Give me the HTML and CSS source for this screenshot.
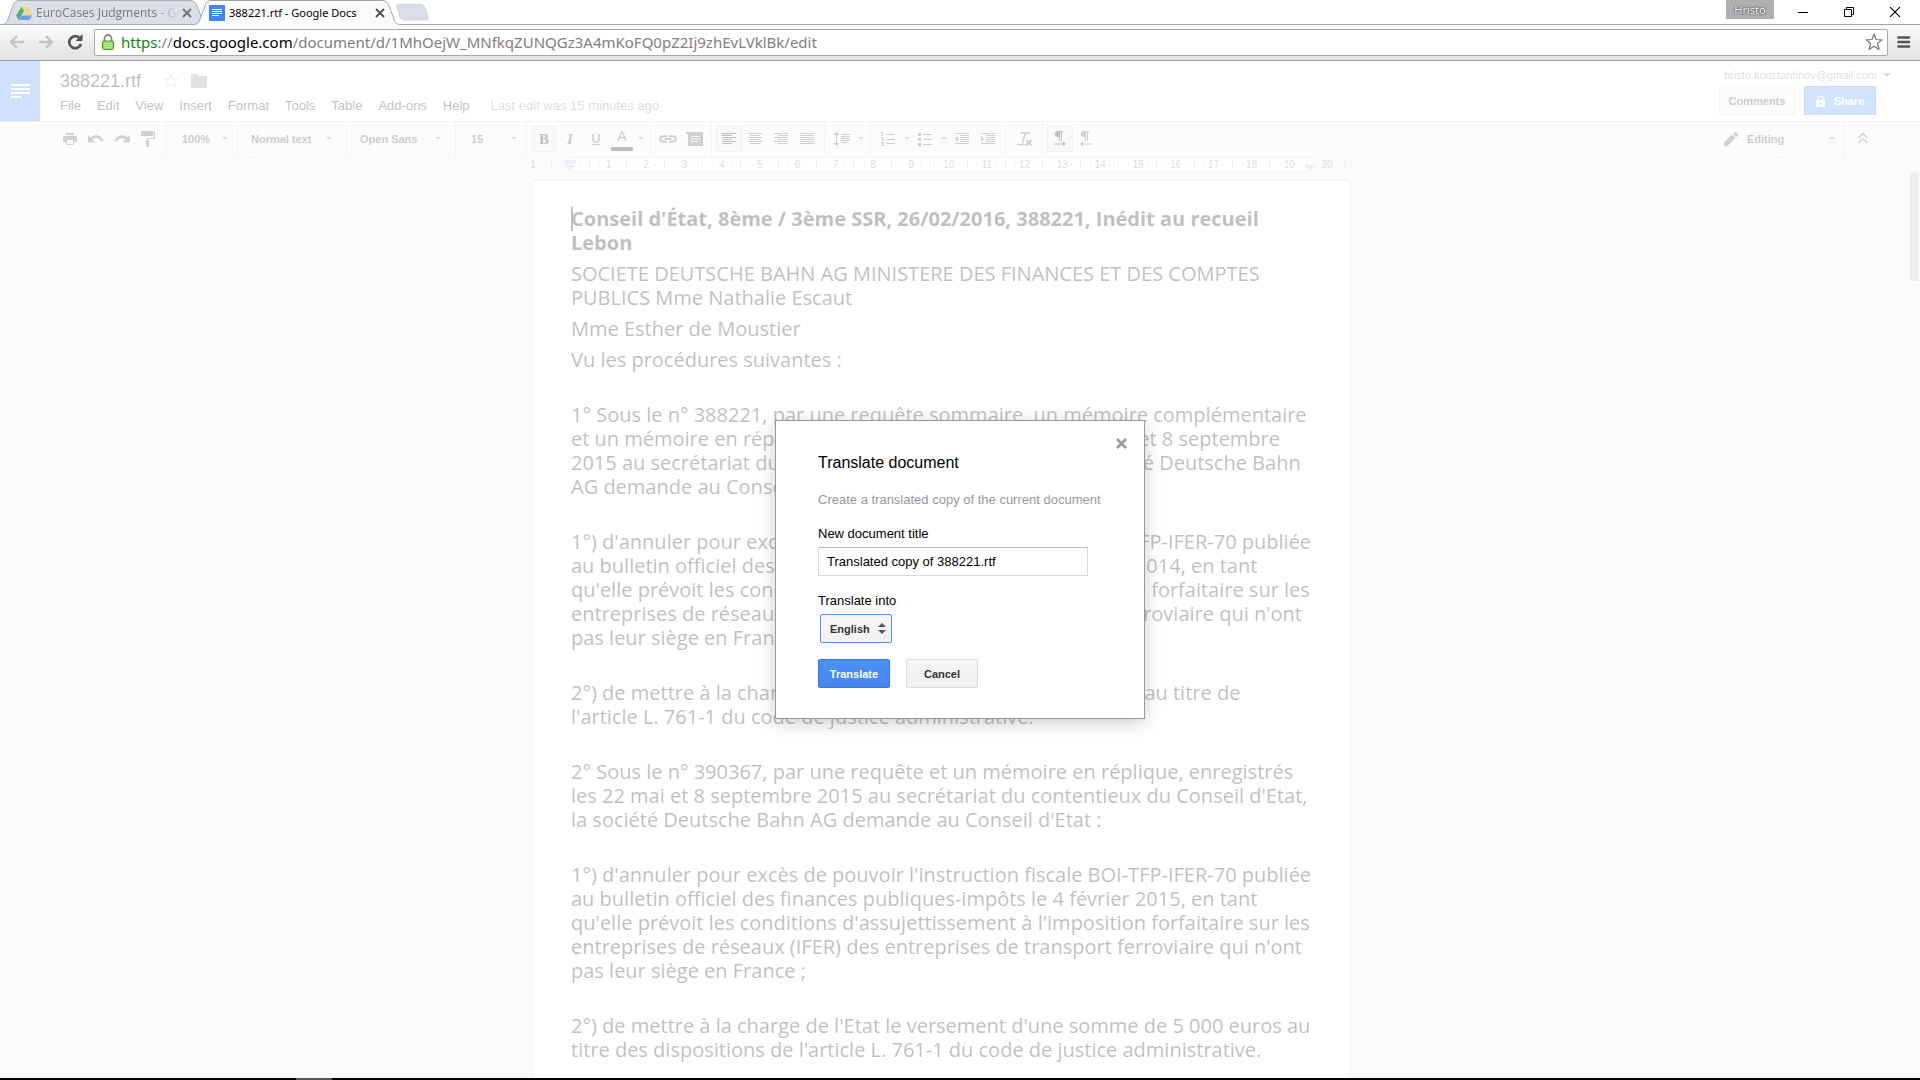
FILE: index.html
```html
<!DOCTYPE html>
<html lang="en">
<head>
<meta charset="utf-8">
<title>388221.rtf - Google Docs</title>
<link rel="stylesheet" href="styles.css">
</head>
<body>
<header class="browser">
  <div class="tabstrip">
    <div class="tab tab-back">
      <svg class="tab-shape" width="204" height="25" viewBox="0 0 204 25"><path d="M0 24.500C4 24 5 22 6 19L11 6C12 2 14 .5 17 .5H188C192 .5 194 3 195 6L200 19C201 22 202 24 204 24.500Z" fill="#dbe0e7" stroke="#a9adb2"/></svg>
      <svg class="favicon" width="16" height="16" viewBox="0 0 16 16"><path d="M5.500 1.500h5L16 10.500h-5z" fill="#ffd666"/><path d="M5.500 1.500L8 6 2.700 15 0 10.500z" fill="#4db380"/><path d="M5.400 10.500H16L13.300 15H2.700z" fill="#6d9cf2"/></svg>
      <span class="tab-title fade">EuroCases Judgments - Go</span>
      <button class="tab-close" aria-label="Close tab"><svg width="10" height="10" viewBox="0 0 10 10"><path d="M1 1l8 8M9 1L1 9" stroke="#777" stroke-width="2"/></svg></button>
    </div>
    <div class="tab tab-front">
      <svg class="tab-shape" width="206" height="26" viewBox="0 0 206 26"><path d="M0 26V24.500C4 24 5 22 6 19L11 6C12 2 14 .5 17 .5H188C192 .5 194 3 195 6L200 19C201 22 202 24 206 24.500V26Z" fill="#fbfbfb"/><path d="M0 24.500C4 24 5 22 6 19L11 6C12 2 14 .5 17 .5H188C192 .5 194 3 195 6L200 19C201 22 202 24 206 24.500" fill="none" stroke="#a5a5a5"/></svg>
      <svg class="favicon" width="16" height="16" viewBox="0 0 16 16"><rect width="16" height="16" rx="1" fill="#4285f4"/><path d="M3 4.500h10M3 6.500h10M3 8.500h10M3 10.500h7" stroke="#fff"/></svg>
      <span class="tab-title">388221.rtf - Google Docs</span>
      <button class="tab-close" aria-label="Close tab"><svg width="10" height="10" viewBox="0 0 10 10"><path d="M1 1l8 8M9 1L1 9" stroke="#555" stroke-width="2"/></svg></button>
    </div>
    <button class="new-tab" aria-label="New tab"><svg width="33" height="17" viewBox="0 0 33 17"><path d="M3 .5H25C27 .5 28 2 29 4L32 13C32.500 15 32 16 30 16H9C6 16 5 15 4 13L1 3C.5 1.500 1 .5 3 .5Z" fill="#dbe0e7" stroke="#cfd2d6"/></svg></button>
    <div class="window-controls">
      <button class="profile">Hristo</button>
      <button class="win-btn" aria-label="Minimize"><svg width="10" height="10" viewBox="0 0 10 10"><path d="M0 5.500h10" stroke="#000"/></svg></button>
      <button class="win-btn" aria-label="Restore"><svg width="10" height="10" viewBox="0 0 10 10"><path d="M.5 2.500h7v7h-7zM2.500 2V.5h7v7H8" fill="none" stroke="#000"/></svg></button>
      <button class="win-btn" aria-label="Close"><svg width="10" height="10" viewBox="0 0 10 10"><path d="M0 0l10 10M10 0L0 10" stroke="#000" stroke-width="1.200"/></svg></button>
    </div>
  </div>
  <div class="navbar">
    <button class="nav-btn" aria-label="Back"><svg width="16" height="14" viewBox="0 0 16 14"><path d="M8 1L2 7l6 6M2 7h13" fill="none" stroke="#c3c3c3" stroke-width="2.400"/></svg></button>
    <button class="nav-btn" aria-label="Forward"><svg width="16" height="14" viewBox="0 0 16 14"><path d="M8 1l6 6-6 6M14 7H1" fill="none" stroke="#c3c3c3" stroke-width="2.400"/></svg></button>
    <button class="nav-btn" aria-label="Reload"><svg width="16" height="16" viewBox="0 0 16 16"><path d="M13 4.500A6 6 0 1 0 14 10" fill="none" stroke="#555" stroke-width="2.700"/><path d="M15.500 0v7h-7z" fill="#555"/></svg></button>
    <div class="omnibox">
      <svg width="12" height="16" viewBox="0 0 12 16"><path d="M2.500 8V4.500a3.500 3.500 0 0 1 7 0V8" fill="none" stroke="#888" stroke-width="1.800"/><rect x=".5" y="7" width="11" height="8.500" rx="1" fill="#8fdc62" stroke="#4f9a35"/><path d="M2 9.500h8M2 11.500h8M2 13.500h8" stroke="#b4ee90"/></svg>
      <div class="url"><span class="scheme">https</span>://<span class="host">docs.google.com</span>/document/d/1MhOejW_MNfkqZUNQGz3A4mKoFQ0pZ2Ij9zhEvLVklBk/edit</div>
      <button class="bookmark" aria-label="Bookmark"><svg width="18" height="18" viewBox="0 0 18 18"><path d="M9 1l2 5.500 6 .3-4.600 3.700 1.600 6L9 13.200 4 16.500l1.600-6L1 6.800l6-.3z" fill="#fff" stroke="#777" stroke-width="1.200" stroke-linejoin="round"/></svg></button>
    </div>
    <button class="chrome-menu" aria-label="Menu"><svg width="14" height="14" viewBox="0 0 14 14"><path d="M1.500 2.500h10.500M1.500 7h10.500M1.500 11.500h10.500" stroke="#555" stroke-width="2.600" stroke-linecap="round"/></svg></button>
  </div>
</header>

<main class="app">
  <header class="docs-header">
    <a class="docs-home" href="#" aria-label="Docs home"><svg width="20" height="14" viewBox="0 0 20 14"><path d="M1 1h19M1 5h19M1 9h19M1 13h10" stroke="#fff" stroke-width="2"/></svg></a>
    <div class="docs-titles">
      <div class="title-row">
        <h1 class="doc-title">388221.rtf</h1>
        <button class="icon-btn" aria-label="Star"><svg width="16" height="16" viewBox="0 0 16 16"><path d="M8 1.500l1.700 4.700 5 .1-4 3 1.500 4.900L8 11.400l-4.200 2.800 1.500-4.900-4-3 5-.1z" fill="none" stroke="#bbb"/></svg></button>
        <button class="icon-btn" aria-label="Move to folder"><svg width="16" height="14" viewBox="0 0 16 14"><path d="M0 0h6l2 2h8v12H0z" fill="#8c8c8c"/></svg></button>
      </div>
      <nav class="menus">
        <button>File</button><button>Edit</button><button>View</button><button>Insert</button><button>Format</button><button>Tools</button><button>Table</button><button>Add-ons</button><button>Help</button>
        <a class="last-edit" href="#">Last edit was 15 minutes ago</a>
      </nav>
    </div>
    <div class="account">
      <button class="email">hristo.konstantinov@gmail.com <svg width="8" height="4" viewBox="0 0 8 4"><path d="M0 0h8L4 4z" fill="#777"/></svg></button>
      <div class="account-actions">
        <button class="btn comments">Comments</button>
        <button class="btn share"><svg width="9" height="12" viewBox="0 0 9 12"><path d="M2 5V3.500a2.500 2.500 0 0 1 5 0V5" fill="none" stroke="#fff" stroke-width="1.200"/><path d="M0 5h9v7H0zM4.500 7.200a1.300 1.300 0 1 0 .01 0z" fill="#fff" fill-rule="evenodd"/></svg>Share</button>
      </div>
    </div>
  </header>

  <div class="toolbar">
    <div class="group group-first">
      <button class="tool" aria-label="Print"><svg width="14" height="12" viewBox="0 0 14 12"><path d="M3 0h8v2H3zM1 3h12q1 0 1 1v5h-3V7H3v2H0V4q0-1 1-1z"/><path d="M3.500 7v4.500h7V7" fill="none" stroke="#444"/></svg></button>
      <button class="tool" aria-label="Undo"><svg width="16" height="8" viewBox="0 0 16 8"><path d="M0 0l2.500 2.500C6-1 13-.5 15.500 6l-2 .7C11.500 2.500 7.500 2 4.500 4.500L7.500 7.500H0z"/></svg></button>
      <button class="tool" aria-label="Redo"><svg width="16" height="8" viewBox="0 0 16 8"><path d="M16 0l-2.500 2.500C10-1 3-.5.5 6l2 .7C4.500 2.500 8.500 2 11.500 4.500L8.500 7.500H16z"/></svg></button>
      <button class="tool" aria-label="Paint format"><svg width="14" height="16" viewBox="0 0 14 16"><path d="M0 0h12v5H0zM5 9h3v7H5z"/><path d="M12 1.500h1.500v6h-7V9" fill="none" stroke="#444"/></svg></button>
    </div>
    <div class="group drop narrow"><button>100%<i class="caret"></i></button></div>
    <div class="group drop wide"><button>Normal text<i class="caret"></i></button></div>
    <div class="group drop wide"><button>Open Sans<i class="caret"></i></button></div>
    <div class="group drop narrow"><button>15<i class="caret"></i></button></div>
    <div class="group">
      <button class="tool active letter bold">B</button>
      <button class="tool letter italic">I</button>
      <button class="tool letter underline">U</button>
      <button class="tool color">A</button>
      <button class="tool-caret" aria-label="Text colour options"><i class="caret"></i></button>
    </div>
    <div class="group">
      <button class="tool" aria-label="Insert link"><svg width="18" height="8" viewBox="0 0 18 8"><path d="M8 1.200H4a2.800 2.800 0 0 0 0 5.600h4M10 1.200h4a2.800 2.800 0 0 1 0 5.600h-4M5.500 4h7" fill="none" stroke="#444" stroke-width="2"/></svg></button>
      <button class="tool" aria-label="Insert comment"><svg width="18" height="14" viewBox="0 0 18 14"><path d="M0 0h18v14H3V3z"/><path d="M6 4.500h9M6 7h9M6 9.500h7" stroke="#f5f5f5" stroke-width="1.200"/></svg></button>
    </div>
    <div class="group">
      <button class="tool active" aria-label="Align left"><svg width="14" height="12" viewBox="0 0 14 12"><path class="line" d="M0 .5h14M0 2.500h10M0 4.500h14M0 6.500h10M0 8.500h14M0 10.500h10"/></svg></button>
      <button class="tool" aria-label="Align centre"><svg width="14" height="12" viewBox="0 0 14 12"><path class="line" d="M0 .5h14M2 2.500h10M0 4.500h14M2 6.500h10M0 8.500h14M2 10.500h10"/></svg></button>
      <button class="tool" aria-label="Align right"><svg width="14" height="12" viewBox="0 0 14 12"><path class="line" d="M0 .5h14M4 2.500h10M0 4.500h14M4 6.500h10M0 8.500h14M4 10.500h10"/></svg></button>
      <button class="tool" aria-label="Justify"><svg width="14" height="12" viewBox="0 0 14 12"><path class="line" d="M0 .5h14M0 2.500h14M0 4.500h14M0 6.500h14M0 8.500h14M0 10.500h14"/></svg></button>
    </div>
    <div class="group">
      <button class="tool" aria-label="Line spacing"><svg width="16" height="14" viewBox="0 0 16 14"><path d="M2.500 0L5.500 3h-6zM2.500 14l3-3h-6z"/><path class="line" d="M2.500 2v10M7 2.500h9M7 4.500h9M7 6.500h9M7 8.500h9M7 10.500h6"/></svg></button>
      <button class="tool-caret" aria-label="Line spacing options"><i class="caret"></i></button>
    </div>
    <div class="group">
      <button class="tool" aria-label="Numbered list"><svg width="14" height="14" viewBox="0 0 14 14"><path class="line" d="M5 2.500h9M5 7.500h9M5 11.500h9M0 .5h1.500V4M0 5.500h2.500L.5 8.500H3M0 10.500h2.500v3H0M1 12h1.500"/></svg></button>
      <button class="tool-caret" aria-label="Numbered list options"><i class="caret"></i></button>
      <button class="tool" aria-label="Bulleted list"><svg width="14" height="14" viewBox="0 0 14 14"><path d="M0 1h3v3H0zM0 6h3v3H0zM0 11h3v3H0z"/><path class="line" d="M5 2.500h9M5 7.500h9M5 12.500h9"/></svg></button>
      <button class="tool-caret" aria-label="Bulleted list options"><i class="caret"></i></button>
      <button class="tool" aria-label="Decrease indent"><svg width="14" height="12" viewBox="0 0 14 12"><path class="line" d="M0 .5h14M5 2.500h9M5 4.500h9M5 6.500h9M5 8.500h9M0 10.500h14"/><path d="M3 3v6L0 6z"/></svg></button>
      <button class="tool" aria-label="Increase indent"><svg width="14" height="12" viewBox="0 0 14 12"><path class="line" d="M0 .5h14M5 2.500h9M5 4.500h9M5 6.500h9M5 8.500h9M0 10.500h14"/><path d="M0 3v6l3-3z"/></svg></button>
    </div>
    <div class="group group-clear">
      <button class="tool" aria-label="Clear formatting"><svg width="16" height="14" viewBox="0 0 16 14"><path d="M3 1h10M8.500 1L5.500 11M0 12.500h8" fill="none" stroke="#444" stroke-width="1.500"/><path d="M9 8l5.500 5.500M14.500 8L9 13.500" stroke="#444" stroke-width="2"/></svg></button>
    </div>
    <div class="group group-last">
      <button class="tool active" aria-label="Left to right"><svg width="12" height="16" viewBox="0 0 12 16"><path d="M4 0h5v1.200H4zM5 0v6H4A3 3 0 0 1 4 0zM5 0h1v10H5zM7 0h1v10H7zM9 10.500l3 2.500-3 2.500z"/><path class="line" d="M0 13h10"/></svg></button>
      <button class="tool" aria-label="Right to left"><svg width="12" height="16" viewBox="0 0 12 16"><path d="M4 0h5v1.200H4zM5 0v6H4A3 3 0 0 1 4 0zM5 0h1v10H5zM7 0h1v10H7zM3 10.500L0 13l3 2.500z"/><path class="line" d="M2 13h10"/></svg></button>
    </div>
    <div class="group drop mode"><button><svg width="14" height="14" viewBox="0 0 14 14"><path d="M0 14v-3.500L8 2.500 11.500 6 3.500 14zM9 1.500L10.500 0Q11.500-.3 13.500 2T14 3.500L12.500 5z"/></svg>Editing<i class="caret"></i></button></div>
    <div class="group hide-menus">
      <button class="tool" aria-label="Hide the menus"><svg width="10" height="11" viewBox="0 0 10 11"><path d="M.5 5L5 .8 9.500 5M.5 10L5 5.800 9.500 10" fill="none" stroke="#444" stroke-width="1.400"/></svg></button>
    </div>
  </div>

  <div class="ruler">
    <div class="ruler-page">
      <div class="ruler-scale">
        <span>1</span><span class="zero"></span><span>1</span><span>2</span><span>3</span><span>4</span><span>5</span><span>6</span><span>7</span><span>8</span><span>9</span><span>10</span><span>11</span><span>12</span><span>13</span><span>14</span><span>15</span><span>16</span><span>17</span><span>18</span><span>19</span><span>20</span>
      </div>
      <svg class="marker marker-left" width="11" height="11" viewBox="0 0 11 11"><path d="M0 0h11v4H0zM0 5h11L5.500 11z" fill="#a0c3ff"/></svg>
      <svg class="marker marker-right" width="12" height="6" viewBox="0 0 12 6"><path d="M0 0h12L6 6z" fill="#a0c3ff"/></svg>
    </div>
  </div>

  <div class="canvas">
    <article class="page">
      <p class="bold-line">Conseil d'État, 8ème / 3ème SSR, 26/02/2016, 388221, Inédit au recueil<br>Lebon</p>
      <p>SOCIETE DEUTSCHE BAHN AG MINISTERE DES FINANCES ET DES COMPTES<br>PUBLICS Mme Nathalie Escaut</p>
      <p>Mme Esther de Moustier</p>
      <p>Vu les procédures suivantes :</p>
      <p class="spaced">1° Sous le n° 388221, par une requête sommaire, un mémoire complémentaire<br>et un mémoire en réplique, enregistrés les 25 février, 26 mai et 8 septembre<br>2015 au secrétariat du contentieux du Conseil d'Etat, la société Deutsche Bahn<br>AG demande au Conseil d'Etat :</p>
      <p class="spaced">1°) d'annuler pour excès de pouvoir l'instruction fiscale BOI-TFP-IFER-70 publiée<br>au bulletin officiel des finances publiques-impôts le 5 février 2014, en tant<br>qu'elle prévoit les conditions d'assujettissement à l'imposition forfaitaire sur les<br>entreprises de réseaux (IFER) des entreprises de transport ferroviaire qui n'ont<br>pas leur siège en France ;</p>
      <p class="spaced">2°) de mettre à la charge de l'Etat une somme de 5 000 euros au titre de<br>l'article L. 761-1 du code de justice administrative.</p>
      <p class="spaced">2° Sous le n° 390367, par une requête et un mémoire en réplique, enregistrés<br>les 22 mai et 8 septembre 2015 au secrétariat du contentieux du Conseil d'Etat,<br>la société Deutsche Bahn AG demande au Conseil d'Etat :</p>
      <p class="spaced">1°) d'annuler pour excès de pouvoir l'instruction fiscale BOI-TFP-IFER-70 publiée<br>au bulletin officiel des finances publiques-impôts le 4 février 2015, en tant<br>qu'elle prévoit les conditions d'assujettissement à l'imposition forfaitaire sur les<br>entreprises de réseaux (IFER) des entreprises de transport ferroviaire qui n'ont<br>pas leur siège en France ;</p>
      <p class="spaced">2°) de mettre à la charge de l'Etat le versement d'une somme de 5 000 euros au<br>titre des dispositions de l'article L. 761-1 du code de justice administrative.</p>
    </article>
    <div class="scroll-thumb"></div>
  </div>

  <div class="scrim">
    <form class="dialog" role="dialog" aria-labelledby="dialog-title">
      <button type="button" class="dialog-close" aria-label="Close"><svg width="11" height="11" viewBox="0 0 11 11"><path d="M1 1l9 9M10 1l-9 9" stroke="#999" stroke-width="2.600"/></svg></button>
      <h2 id="dialog-title">Translate document</h2>
      <p class="dialog-note">Create a translated copy of the current document</p>
      <label for="new-title">New document title</label>
      <input id="new-title" type="text" value="Translated copy of 388221.rtf">
      <label for="language">Translate into</label>
      <div class="select-wrap">
        <select id="language"><option>English</option></select>
        <svg class="select-arrows" width="8" height="11" viewBox="0 0 8 11"><path d="M4 0l4 4H0zM4 11l4-4H0z" fill="#555"/></svg>
      </div>
      <div class="dialog-actions">
        <button type="button" class="btn primary">Translate</button>
        <button type="button" class="btn">Cancel</button>
      </div>
    </form>
  </div>
</main>
<footer class="taskbar"><div class="taskbar-item"></div></footer>
</body>
</html>
```
FILE: styles.css
```css
* { box-sizing: border-box; }

body {
  margin: 0;
  height: 100vh;
  display: flex;
  flex-direction: column;
  overflow: hidden;
  background: #fff;
  font: 13px/16px "Liberation Sans", Arial, sans-serif;
  color: #000;
}

button {
  margin: 0;
  padding: 0;
  border: 0;
  background: none;
  font: inherit;
  color: inherit;
}

svg { display: block; flex: none; }
a { color: inherit; text-decoration: none; }

/* Browser frame */
.browser { font-family: "Noto Sans", "Open Sans", sans-serif; }

.tabstrip {
  display: flex;
  height: 25px;
  border-bottom: 1px solid #a5a5a5;
  padding-left: 2px;
}

.tab {
  position: relative;
  display: flex;
  align-items: center;
  height: 25px;
  font-size: 12px;
}
.tab-back { width: 192px; padding-left: 14px; color: #777; }
.tab-front { width: 202px; padding-left: 15px; z-index: 1; }
.tab-shape { position: absolute; left: 0; top: 0; z-index: -1; }
.tab-back { z-index: 0; }
.tab-title {
  margin-left: 4px;
  width: 142px;
  white-space: nowrap;
  overflow: hidden;
  font-size: 11px;
}
.tab-back .tab-title { font-family: "Open Sans", sans-serif; font-size: 12px; }
.fade { -webkit-mask-image: linear-gradient(90deg, #000 120px, transparent 142px); mask-image: linear-gradient(90deg, #000 120px, transparent 142px); }
.tab-close { margin-left: 4px; }
.new-tab { align-self: center; }

.window-controls { display: flex; margin-left: auto; padding-right: 2px; align-items: flex-start; }
.profile {
  width: 48px;
  height: 19px;
  margin-right: 6px;
  background: #b0b0b0;
  color: #fff;
  font-size: 11px;
  text-shadow: 0 0 2px #333, 0 0 1px #333;
}
.win-btn { width: 46px; height: 24px; display: grid; place-items: center; }

.navbar {
  display: flex;
  align-items: center;
  height: 36px;
  padding: 0 9px 0 3px;
  gap: 1px;
  background: linear-gradient(#fbfbfb, #e2e2e2);
  border-bottom: 1px solid #a0a0a0;
}
.nav-btn { width: 28px; height: 28px; padding-bottom: 2px; display: grid; place-items: center; }
.omnibox {
  flex: 1;
  display: flex;
  align-items: center;
  height: 27px;
  margin-left: 4px;
  padding: 0 4px 2px 7px;
  border: 1px solid #a9a9a9;
  border-radius: 2px;
  background: #fff;
}
.url { flex: 1; margin-left: 7px; font-size: 15px; line-height: 22px; color: #808080; white-space: nowrap; }
.scheme { color: #0b8a0b; }
.host { color: #000; }
.chrome-menu { margin-left: 8px; padding-bottom: 2px; }

/* Docs application */
.app {
  position: relative;
  flex: 1;
  min-height: 0;
  display: flex;
  flex-direction: column;
}

.docs-header { display: flex; height: 60px; }
.docs-home { width: 40px; display: grid; place-items: center; background: #4285f4; }
.docs-titles { padding: 9px 0 0 20px; }
.title-row { display: flex; align-items: center; height: 22px; }
.doc-title { margin: 0; font-size: 18px; font-weight: 400; line-height: 22px; width: 103px; }
.icon-btn + .icon-btn { margin-left: 12px; }
.menus { display: flex; gap: 16px; margin-top: 5px; line-height: 18px; }
.last-edit { margin-left: 5px; color: #777; }

.account { margin-left: auto; padding: 6px 29px 0 0; }
.email { display: flex; align-items: center; gap: 6px; margin-left: 5px; font-size: 11px; line-height: 16px; color: #777; }
.account-actions { display: flex; gap: 9px; margin-top: 3px; }

.btn {
  display: flex;
  align-items: center;
  justify-content: center;
  height: 29px;
  min-width: 72px;
  border: 1px solid #dcdcdc;
  border-radius: 2px;
  background: linear-gradient(#f5f5f5, #f1f1f1);
  font-size: 11px;
  font-weight: 700;
  color: #333;
}
.comments { width: 76px; }
.share { gap: 9px; border-color: #3079ed; background: #4d90fe; color: #fff; }

.toolbar {
  display: flex;
  height: 37px;
  border-top: 1px solid #d4d4d4;
  border-bottom: 1px solid #d8d8d8;
  background: linear-gradient(#f5f5f5, #f0f0f0);
  font-size: 11px;
  font-weight: 700;
  color: #333;
}
.group { display: flex; align-items: center; padding: 0 4px 2px; border-right: 1px solid #d4d4d4; }
.group-first { padding-left: 57px; padding-right: 5px; }
.group-clear { padding-left: 6px; }
.group-last { border-right: 0; }
.tool { width: 26px; height: 26px; display: grid; place-items: center; }
.tool svg, .mode svg { fill: #444; overflow: visible; }
.line { fill: none; stroke: #444; stroke-width: 1; }
.active { border: 1px solid #c8c8c8; border-radius: 2px; background: #e8e8e8; }
.active svg { fill: #000; }
.active .line { stroke: #000; }
.letter { font: 700 15px/20px "Liberation Serif", serif; }
.letter.bold { font-weight: 700; color: #000; }
.letter.italic { font-style: italic; }
.letter.underline { text-decoration: underline; font-family: "Liberation Sans", sans-serif; font-size: 13px; color: #555; }
.color { width: 26px; font-size: 14px; font-weight: 400; line-height: 18px; }
.color::after { content: ""; width: 22px; height: 4px; background: #000; }
.tool-caret { width: 11px; height: 26px; display: grid; place-items: center; }
.caret { border: 3px solid transparent; border-top-color: #777; border-bottom: 0; }
.drop { padding: 0; }
.drop button { display: flex; flex: 1; align-items: center; height: 100%; padding: 0 9px 2px 15px; }
.drop .caret { margin-left: auto; }
.narrow { width: 71px; }
.wide { width: 109px; }
.wide button { padding: 0 14px 2px 13px; }
.mode { width: 136px; margin-left: auto; }
.mode svg { margin-right: 9px; }
.hide-menus { width: 75px; padding-left: 5px; border-right: 0; }

.ruler {
  height: 14px;
  padding-right: 38px;
  border-bottom: 1px solid #d8d8d8;
  background: #eee;
}
.ruler-page {
  position: relative;
  width: 816px;
  height: 13px;
  margin: 0 auto;
  background: linear-gradient(#fff, #fff) 38px 0 / 740px 100% no-repeat;
}
.ruler-scale {
  display: grid;
  grid-template-columns: repeat(22, 1fr);
  width: 832px;
  margin-left: -19px;
  font-size: 10px;
  line-height: 13px;
  text-align: center;
  color: #777;
}
.ruler-scale span {
  height: 13px;
  background:
    linear-gradient(#bbb, #bbb) 100% 3px / 1px 7px no-repeat,
    linear-gradient(#ccc, #ccc) 25% 5px / 1px 3px no-repeat,
    linear-gradient(#ccc, #ccc) 75% 5px / 1px 3px no-repeat;
}
.marker { position: absolute; }
.marker-left { left: 32px; top: 2px; }
.marker-right { right: 33px; top: 7px; }

.canvas {
  position: relative;
  flex: 1;
  min-height: 0;
  padding: 8px 38px 0 0;
  background: #eee;
  overflow: hidden;
}
.page {
  width: 816px;
  min-height: 1056px;
  margin: 0 auto;
  padding: 26px 38px;
  border-top: 1px solid #d8d8d8;
  background: #fff;
  box-shadow: 0 0 3px #bbb;
  font: 20px/24px "Open Sans", sans-serif;
  white-space: nowrap;
}
.page p { margin: 0 0 7px; }
.page .spaced { margin-top: 31px; }
.bold-line { font-weight: 700; }
.bold-line::before {
  content: "";
  display: inline-block;
  width: 2px;
  height: 24px;
  margin-right: -2px;
  vertical-align: top;
  background: #000;
}
.scroll-thumb { position: absolute; right: 1px; top: 1px; width: 9px; height: 108px; background: #b8b8b8; }

/* Modal layer */
.scrim {
  position: absolute;
  inset: 0;
  display: grid;
  place-items: center;
  background: rgba(255, 255, 255, .75);
}
.dialog {
  position: relative;
  width: 370px;
  padding: 30px 42px;
  border: 1px solid #999;
  background: #fff;
  box-shadow: 0 4px 16px rgba(0, 0, 0, .2);
}
.dialog-close { position: absolute; right: 17px; top: 17px; }
.dialog h2 { margin: 0 0 17px; font-size: 16px; font-weight: 400; line-height: 24px; }
.dialog-note { margin: 0 0 18px; color: #999; white-space: nowrap; }
.dialog label { display: block; margin-bottom: 5px; }
.dialog input {
  display: block;
  width: 270px;
  height: 29px;
  margin-bottom: 17px;
  padding: 1px 8px;
  border: 1px solid #d9d9d9;
  border-top-color: #c0c0c0;
  font: inherit;
  color: #000;
}
.select-wrap { position: relative; width: 72px; margin: 0 0 16px 2px; }
.dialog select {
  display: block;
  width: 72px;
  height: 29px;
  padding: 0 9px;
  appearance: none;
  border: 1px solid #4d90fe;
  border-radius: 2px;
  background: linear-gradient(#f8f8f8, #f1f1f1);
  font: 700 11px/16px "Liberation Sans", Arial, sans-serif;
  color: #333;
}
.select-arrows { position: absolute; right: 6px; top: 9px; pointer-events: none; }
.dialog-actions { display: flex; gap: 16px; }
.primary { border-color: #3079ed; background: linear-gradient(#4d90fe, #4787ed); color: #fff; }

.taskbar { height: 2px; padding-left: 296px; background: #000; }
.taskbar-item { width: 36px; height: 2px; background: #555; }
```
